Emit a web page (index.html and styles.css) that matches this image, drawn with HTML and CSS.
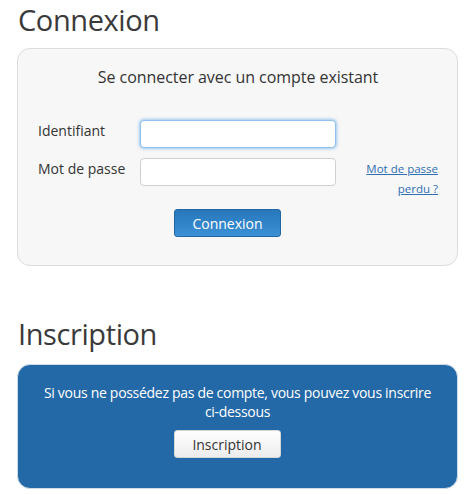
FILE: index.html
```html
<!DOCTYPE html>
<html lang="fr">
<head>
<meta charset="utf-8">
<link rel="stylesheet" href="styles.css">
</head>
<body>
<main class="page">
  <h1 class="section-title">Connexion</h1>
  <section class="panel panel-login">
    <p class="panel-intro">Se connecter avec un compte existant</p>
    <form class="login-form">
      <div class="form-row">
        <label class="form-label" for="login">Identifiant</label>
        <input class="form-input is-focused" id="login" type="text">
      </div>
      <div class="form-row">
        <label class="form-label" for="pwd">Mot de passe</label>
        <input class="form-input" id="pwd" type="password">
        <a class="lost-link" href="#">Mot de passe perdu ?</a>
      </div>
      <div class="button-row">
        <button class="btn btn-primary" type="button">Connexion</button>
      </div>
    </form>
  </section>

  <h1 class="section-title section-title-second">Inscription</h1>
  <section class="panel panel-signup">
    <p class="signup-text">Si vous ne possédez pas de compte, vous pouvez vous inscrire <span class="nowrap">ci-dessous</span></p>
    <div class="button-row">
      <button class="btn btn-light" type="button">Inscription</button>
    </div>
  </section>
</main>
</body>
</html>
```

FILE: styles.css
```css
* { box-sizing: border-box; }

html, body {
  margin: 0;
  padding: 0;
  background: #ffffff;
}

body {
  font-family: "Open Sans", "Noto Sans", "DejaVu Sans", sans-serif;
  color: #333333;
  font-size: 14px;
}

.page {
  padding: 0 16px 0 17px;
}

.section-title {
  margin: 0;
  padding: 0 0 0 1px;
  font-size: 29px;
  font-weight: 400;
  line-height: 40px;
  color: #3a3a3a;
  letter-spacing: -0.4px;
}

.section-title-second {
  margin-top: 48px;
}

.panel {
  border-radius: 13px;
  margin-top: 8px;
}

.panel-login {
  background: #f7f7f7;
  border: 1px solid #dcdcdc;
  padding: 17px 19px 28px 20px;
  height: 218px;
}

.panel-intro {
  margin: 0;
  text-align: center;
  font-size: 16px;
  line-height: 22px;
  color: #333333;
  letter-spacing: -0.05px;
}

.login-form {
  margin-top: 32px;
}

.form-row {
  display: flex;
  align-items: flex-start;
  margin-bottom: 10px;
}

.form-label {
  width: 102px;
  flex: none;
  line-height: 18px;
  padding-top: 2px;
  font-size: 14px;
  color: #333333;
}

.form-input {
  width: 196px;
  height: 28px;
  flex: none;
  margin: 0;
  border: 1px solid #cfcfcf;
  border-radius: 4px;
  background: #ffffff;
  outline: none;
  font: inherit;
}

.form-input.is-focused {
  border-color: #8fc2ee;
  box-shadow: 0 0 3px 1px rgba(120, 180, 235, 0.7);
}

.lost-link {
  margin-left: auto;
  width: 80px;
  padding-top: 1px;
  text-align: right;
  font-size: 11.5px;
  line-height: 20px;
  color: #2f6fb3;
  text-decoration: underline;
}

.button-row {
  display: flex;
  justify-content: center;
  padding-right: 21px;
}

.btn {
  width: 107px;
  height: 28px;
  font-family: inherit;
  font-size: 14px;
  border-radius: 3px;
  padding: 0;
  cursor: pointer;
}

.btn-primary {
  color: #ffffff;
  border: 1px solid #2466a3;
  background: linear-gradient(#2777bb, #3c90d5);
}

.btn-light {
  color: #333333;
  border: 1px solid #d6d6d6;
  background: linear-gradient(#ffffff, #ececec);
}

.panel-signup {
  background: #2369a8;
  border: 1px solid #d0dbe6;
  padding: 18px 20px 28px 20px;
  height: 125px;
  margin-top: 10px;
}

.signup-text {
  margin: 0 0 9px;
  text-align: center;
  color: #ffffff;
  font-size: 14px;
  line-height: 19px;
  letter-spacing: -0.3px;
}

.nowrap {
  white-space: nowrap;
}
```
